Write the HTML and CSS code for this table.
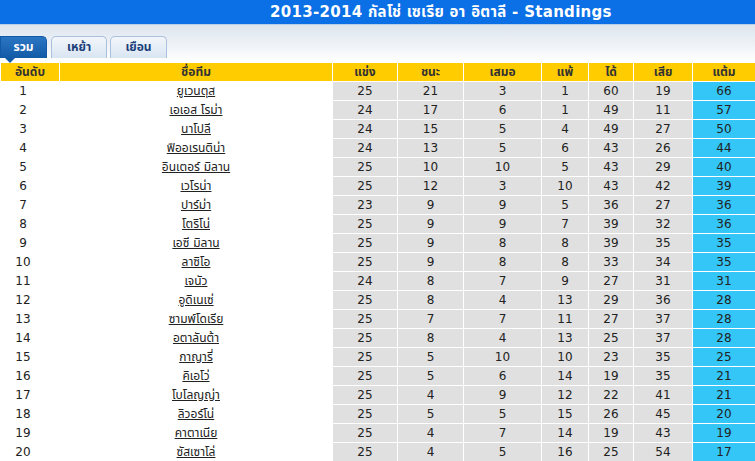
FILE: index.html
```html
<!DOCTYPE html>
<html lang="th">
<head>
<meta charset="utf-8">
<title>Standings</title>
<link rel="stylesheet" href="styles.css">
</head>
<body>
<div class="title"><span>2013-2014 กัลโช่ เซเรีย อา อิตาลี - Standings</span></div>
<div class="tabbar">
  <div class="tab active">รวม</div>
  <div class="tab home">เหย้า</div>
  <div class="tab away">เยือน</div>
</div>
<table class="standings">
  <colgroup>
    <col class="c-rank"><col class="c-team"><col class="c-p"><col class="c-w"><col class="c-d"><col class="c-l"><col class="c-f"><col class="c-a"><col class="c-pts">
  </colgroup>
  <thead>
    <tr><th>อันดับ</th><th>ชื่อทีม</th><th>แข่ง</th><th>ชนะ</th><th>เสมอ</th><th>แพ้</th><th>ได้</th><th>เสีย</th><th>แต้ม</th></tr>
  </thead>
  <tbody>
    <tr><td class="rank">1</td><td class="team"><a>ยูเวนตุส</a></td><td>25</td><td>21</td><td>3</td><td>1</td><td>60</td><td>19</td><td class="pts">66</td></tr>
    <tr><td class="rank">2</td><td class="team"><a>เอเอส โรม่า</a></td><td>24</td><td>17</td><td>6</td><td>1</td><td>49</td><td>11</td><td class="pts">57</td></tr>
    <tr><td class="rank">3</td><td class="team"><a>นาโปลี</a></td><td>24</td><td>15</td><td>5</td><td>4</td><td>49</td><td>27</td><td class="pts">50</td></tr>
    <tr><td class="rank">4</td><td class="team"><a>ฟิออเรนติน่า</a></td><td>24</td><td>13</td><td>5</td><td>6</td><td>43</td><td>26</td><td class="pts">44</td></tr>
    <tr><td class="rank">5</td><td class="team"><a>อินเตอร์ มิลาน</a></td><td>25</td><td>10</td><td>10</td><td>5</td><td>43</td><td>29</td><td class="pts">40</td></tr>
    <tr><td class="rank">6</td><td class="team"><a>เวโรน่า</a></td><td>25</td><td>12</td><td>3</td><td>10</td><td>43</td><td>42</td><td class="pts">39</td></tr>
    <tr><td class="rank">7</td><td class="team"><a>ปาร์ม่า</a></td><td>23</td><td>9</td><td>9</td><td>5</td><td>36</td><td>27</td><td class="pts">36</td></tr>
    <tr><td class="rank">8</td><td class="team"><a>โตริโน่</a></td><td>25</td><td>9</td><td>9</td><td>7</td><td>39</td><td>32</td><td class="pts">36</td></tr>
    <tr><td class="rank">9</td><td class="team"><a>เอซี มิลาน</a></td><td>25</td><td>9</td><td>8</td><td>8</td><td>39</td><td>35</td><td class="pts">35</td></tr>
    <tr><td class="rank">10</td><td class="team"><a>ลาซิโอ</a></td><td>25</td><td>9</td><td>8</td><td>8</td><td>33</td><td>34</td><td class="pts">35</td></tr>
    <tr><td class="rank">11</td><td class="team"><a>เจนัว</a></td><td>24</td><td>8</td><td>7</td><td>9</td><td>27</td><td>31</td><td class="pts">31</td></tr>
    <tr><td class="rank">12</td><td class="team"><a>อูดิเนเซ่</a></td><td>25</td><td>8</td><td>4</td><td>13</td><td>29</td><td>36</td><td class="pts">28</td></tr>
    <tr><td class="rank">13</td><td class="team"><a>ซามพ์โดเรีย</a></td><td>25</td><td>7</td><td>7</td><td>11</td><td>27</td><td>37</td><td class="pts">28</td></tr>
    <tr><td class="rank">14</td><td class="team"><a>อตาลันต้า</a></td><td>25</td><td>8</td><td>4</td><td>13</td><td>25</td><td>37</td><td class="pts">28</td></tr>
    <tr><td class="rank">15</td><td class="team"><a>กาญารี่</a></td><td>25</td><td>5</td><td>10</td><td>10</td><td>23</td><td>35</td><td class="pts">25</td></tr>
    <tr><td class="rank">16</td><td class="team"><a>คิเอโว่</a></td><td>25</td><td>5</td><td>6</td><td>14</td><td>19</td><td>35</td><td class="pts">21</td></tr>
    <tr><td class="rank">17</td><td class="team"><a>โบโลญญ่า</a></td><td>25</td><td>4</td><td>9</td><td>12</td><td>22</td><td>41</td><td class="pts">21</td></tr>
    <tr><td class="rank">18</td><td class="team"><a>ลิวอร์โน่</a></td><td>25</td><td>5</td><td>5</td><td>15</td><td>26</td><td>45</td><td class="pts">20</td></tr>
    <tr><td class="rank">19</td><td class="team"><a>คาตาเนีย</a></td><td>25</td><td>4</td><td>7</td><td>14</td><td>19</td><td>43</td><td class="pts">19</td></tr>
    <tr><td class="rank">20</td><td class="team"><a>ซัสเซาโล่</a></td><td>25</td><td>4</td><td>5</td><td>16</td><td>25</td><td>54</td><td class="pts">17</td></tr>
  </tbody>
</table>
</body>
</html>
```
FILE: styles.css
```css
html, body {
  margin: 0;
  padding: 0;
  background: #ffffff;
}
body {
  width: 755px;
  height: 461px;
  overflow: hidden;
  font-family: Tahoma, "DejaVu Sans", "Noto Sans Thai", "Noto Sans", sans-serif;
  font-size: 12px;
  color: #222;
}
.title {
  height: 24px;
  line-height: 24px;
  background: #0b6fe6;
  border-bottom: 1px solid #b8cfe8;
  color: #ffffff;
  font-family: "DejaVu Sans", "Noto Sans Thai", sans-serif;
  font-weight: bold;
  font-size: 15px;
  padding-left: 270px;
  white-space: nowrap;
  letter-spacing: 0.3px;
}
.tabbar {
  height: 36px;
  box-sizing: border-box;
  background: linear-gradient(to bottom, #dde5ee 0%, #f3f6f9 70%, #ffffff 100%);
  display: flex;
  align-items: flex-end;
  gap: 4px;
}
.tab {
  position: relative;
  height: 22px;
  box-sizing: border-box;
  line-height: 20px;
  text-align: center;
  border: 1px solid #a9c1dd;
  border-bottom: none;
  border-radius: 5px 5px 0 0;
  background: linear-gradient(to bottom, #f2f6fb, #d9e5f2);
  color: #1b3f78;
  font-weight: bold;
  font-size: 12px;
  margin-bottom: 3px;
}
.tab.active {
  width: 47px;
  background: linear-gradient(to bottom, #2b76c4, #135aa6);
  border-color: #135aa6;
  color: #ffffff;
  border-radius: 0 5px 0 0;
}
.tab.home { width: 56px; }
.tab.away { width: 57px; margin-left: -1px; }
.tab.active::after {
  content: "";
  position: absolute;
  left: 4px;
  bottom: -5px;
  border-left: 5px solid transparent;
  border-right: 5px solid transparent;
  border-top: 5px solid #135aa6;
}
.standings {
  width: 755px;
  border-collapse: collapse;
  table-layout: fixed;
  margin-top: 1px;
}
.c-rank { width: 59px; }
.c-team { width: 273px; }
.c-p { width: 65px; }
.c-w { width: 66px; }
.c-d { width: 78px; }
.c-l { width: 47px; }
.c-f { width: 45px; }
.c-a { width: 59px; }
.c-pts { width: 63px; }
.standings th,
.standings td {
  border: 1px solid #ffffff;
  height: 18px;
  padding: 0;
  text-align: center;
  white-space: nowrap;
  line-height: 17px;
}
.standings th {
  background: #ffcc00;
  color: #333;
  font-weight: bold;
}
.standings td {
  background: #e0e0e0;
  color: #222;
}
.standings td.rank {
  background: #ffffff;
  padding-right: 14px;
}
.standings td.team {
  background: #ffffff;
}
.standings td.team a {
  color: #222;
  text-decoration: underline;
}
.standings td.pts {
  background: #33c6f7;
}
```
